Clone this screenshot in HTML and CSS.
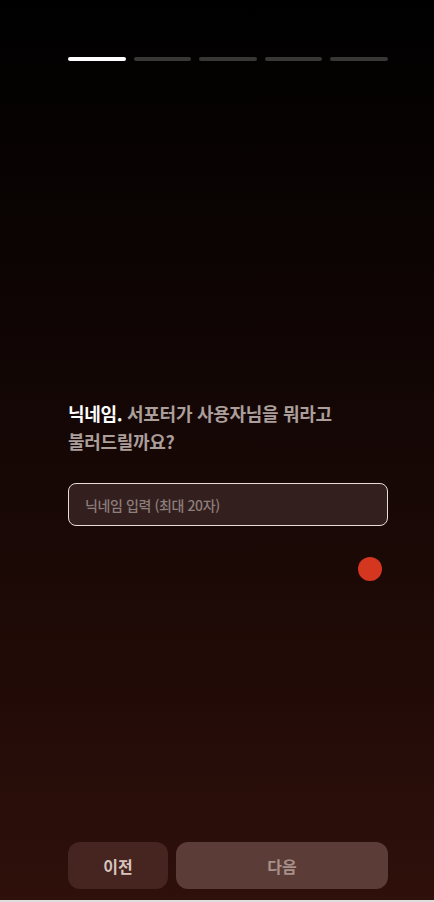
FILE: index.html
```html
<!DOCTYPE html>
<html lang="ko">
<head>
<meta charset="utf-8">
<link rel="stylesheet" href="styles.css">
</head>
<body>
<div class="screen">
  <div class="progress">
    <span class="seg active"></span>
    <span class="seg"></span>
    <span class="seg"></span>
    <span class="seg"></span>
    <span class="seg"></span>
  </div>
  <div class="main">
    <h1 class="title"><span class="hl">닉네임.</span> 서포터가 사용자님을 뭐라고 불러드릴까요?</h1>
    <input class="field" type="text" placeholder="닉네임 입력 (최대 20자)">
    <div class="dot-row"><span class="dot"></span></div>
  </div>
  <div class="actions">
    <button class="btn prev">이전</button>
    <button class="btn next">다음</button>
  </div>
</div>
</body>
</html>
```
FILE: styles.css
```css
html { background: #dedede; }
body {
  margin: 0;
  font-family: "Noto Sans CJK KR", "Noto Sans", sans-serif;
}
.screen {
  height: 900px;
  box-sizing: border-box;
  padding: 57px 46px 11px 68px;
  display: flex;
  flex-direction: column;
  background: linear-gradient(to bottom, #000000 0%, #0f0504 35%, #210b07 75%, #2f100b 100%);
}
.progress {
  display: flex;
  gap: 8px;
}
.seg {
  flex: 1;
  height: 4px;
  border-radius: 2px;
  background: #3a3636;
}
.seg.active { background: #ffffff; }
.main {
  margin-top: 338px;
  flex: 1;
  display: flex;
  flex-direction: column;
}
.title {
  margin: 0;
  font-size: 18px;
  line-height: 28px;
  font-weight: 700;
  color: #ab9e9b;
  letter-spacing: -0.3px;
  padding-right: 40px;
}
.hl { color: #ffffff; }
.field {
  margin-top: 28px;
  height: 43px;
  box-sizing: border-box;
  border: 1px solid #e6dcda;
  border-radius: 8px;
  background: #33201e;
  padding: 0 16px;
  font-family: inherit;
  font-size: 14px;
  font-weight: 500;
  letter-spacing: -0.4px;
  color: #fff;
  outline: none;
}
.field::placeholder { color: #8c7e7b; }
.dot-row {
  display: flex;
  justify-content: flex-end;
  padding-right: 6px;
  margin-top: 31px;
}
.dot {
  width: 24px;
  height: 24px;
  border-radius: 50%;
  background: #d5361f;
}
.actions {
  display: flex;
  gap: 8px;
}
.btn {
  height: 47px;
  border: none;
  border-radius: 12px;
  font-family: inherit;
  font-size: 16px;
  font-weight: 700;
}
.prev {
  width: 100px;
  background: #46241f;
  color: #d8c4bf;
}
.next {
  flex: 1;
  background: #5b3c36;
  color: #a8918b;
}
```
